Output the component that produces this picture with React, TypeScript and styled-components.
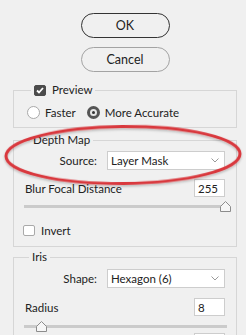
import React from 'react';
import styled, { createGlobalStyle } from 'styled-components';

const GlobalStyle = createGlobalStyle`
  html, body {
    margin: 0;
    background: #f0f0f0;
  }
  body {
    font-family: Lato, "Noto Sans", "Liberation Sans", sans-serif;
    font-size: 11.5px;
    color: #222;
  }
`;

const Panel = styled.div`
  position: relative;
  width: 246px;
  height: 335px;
  overflow: hidden;
  box-sizing: border-box;
  padding: 13px 9px 0 13px;
  display: flex;
  flex-direction: column;
`;

const Buttons = styled.div`
  display: flex;
  flex-direction: column;
  align-items: center;
  gap: 9px;
`;

const PillButton = styled.button<{ $primary?: boolean }>`
  width: 89px;
  height: 25px;
  padding: 0;
  border-radius: 13px;
  border: 1px solid ${(props) => (props.$primary ? '#333' : '#a3a3a3')};
  background: #f0f0f0;
  font-family: inherit;
  font-size: 12.5px;
  color: #222;
`;

const Group = styled.fieldset<{ $gap: number; $bottom?: number }>`
  margin: ${(props) => props.$gap}px 0 0;
  padding: 0 11px ${(props) => props.$bottom ?? 10}px;
  border: 1px solid #d6d6d6;
  min-width: 0;
`;

const Legend = styled.legend<{ $indent: number }>`
  margin-left: ${(props) => props.$indent}px;
  padding: 0 3px;
  height: 14px;
  line-height: 14px;
  display: flex;
  align-items: center;
  gap: 6px;
`;

const Box = styled.span<{ $checked?: boolean }>`
  width: 12px;
  height: 11px;
  box-sizing: border-box;
  border-radius: 2px;
  border: 1px solid ${(props) => (props.$checked ? '#4b4b4b' : '#a9a9a9')};
  background: ${(props) => (props.$checked ? '#4b4b4b' : '#fff')};
  display: flex;
  align-items: center;
  justify-content: center;
  flex: none;
`;

const RadioRow = styled.div`
  display: flex;
  align-items: center;
  margin: 9px 0 0 2px;
  height: 13px;
`;

const RadioItem = styled.label`
  display: flex;
  align-items: center;
  gap: 5px;
  margin-right: 11px;
`;

const Dot = styled.span<{ $checked?: boolean }>`
  width: 13px;
  height: 13px;
  box-sizing: border-box;
  border-radius: 50%;
  border: ${(props) => (props.$checked ? '3px solid #555' : '1px solid #a9a9a9')};
  background: ${(props) => (props.$checked ? '#e6e6e6' : '#fff')};
  display: flex;
  align-items: center;
  justify-content: center;
  &::after {
    content: '';
    display: ${(props) => (props.$checked ? 'block' : 'none')};
    width: 3px;
    height: 3px;
    border-radius: 50%;
    background: #333;
  }
`;

const FieldRow = styled.div<{ $top: number }>`
  display: grid;
  grid-template-columns: 72px 1fr;
  column-gap: 10px;
  align-items: center;
  height: 19px;
  margin-top: ${(props) => props.$top}px;
`;

const FieldLabel = styled.span`
  text-align: right;
`;

const Select = styled.div`
  height: 19px;
  box-sizing: border-box;
  background: #fff;
  border: 1px solid #cdcdcd;
  padding: 0 5px 0 3px;
  display: flex;
  align-items: center;
  justify-content: space-between;
`;

const ValueRow = styled.div<{ $top: number }>`
  display: flex;
  align-items: center;
  justify-content: space-between;
  height: 18px;
  margin-top: ${(props) => props.$top}px;
`;

const NumberBox = styled.div`
  width: 31px;
  height: 18px;
  box-sizing: border-box;
  background: #fff;
  border: 1px solid #cdcdcd;
  padding-left: 3px;
  margin-left: auto;
  display: flex;
  align-items: center;
`;

const Slider = styled.div<{ $top: number }>`
  position: relative;
  height: 11px;
  margin: ${(props) => props.$top}px -2px 0 -1px;
`;

const Track = styled.div`
  position: absolute;
  left: 0;
  right: 0;
  top: 4px;
  height: 3px;
  background: #cbcbcb;
`;

const Thumb = styled.svg`
  position: absolute;
  top: 0;
  width: 11px;
  height: 11px;
`;

const CheckRow = styled.label<{ $top: number }>`
  display: flex;
  align-items: center;
  gap: 6px;
  height: 11px;
  margin: ${(props) => props.$top}px 0 0 -2px;
`;

const Annotation = styled.svg`
  position: absolute;
  left: 0;
  top: 118px;
  width: 246px;
  height: 74px;
  pointer-events: none;
`;

function Chevron() {
  return (
    <svg width="8" height="5" viewBox="0 0 8 5">
      <path d="M0.5 0.5 L4 4 L7.5 0.5" fill="none" stroke="#9a9a9a" strokeWidth="1" />
    </svg>
  );
}

function Check() {
  return (
    <svg width="8" height="7" viewBox="0 0 8 7">
      <path d="M1 3.5 L3 5.5 L7 1" fill="none" stroke="#fff" strokeWidth="1.8" />
    </svg>
  );
}

function SliderBar({ value, max, top }: { value: number; max: number; top: number }) {
  const f = value / max;
  return (
    <Slider $top={top}>
      <Track />
      <Thumb viewBox="0 0 11 11" style={{ left: `calc(${f} * 100% - 7px)` }}>
        <path d="M0.5 10.5 V5.5 L5.5 0.5 L10.5 5.5 V10.5 Z" fill="#f6f6f6" stroke="#8c8c8c" />
      </Thumb>
    </Slider>
  );
}

function App() {
  return (
    <>
      <GlobalStyle />
      <Panel>
        <Buttons>
          <PillButton $primary>OK</PillButton>
          <PillButton>Cancel</PillButton>
        </Buttons>

        <Group $gap={11} $bottom={8}>
          <Legend $indent={6}>
            <Box $checked>
              <Check />
            </Box>
            Preview
          </Legend>
          <RadioRow>
            <RadioItem>
              <Dot />
              Faster
            </RadioItem>
            <RadioItem>
              <Dot $checked />
              More Accurate
            </RadioItem>
          </RadioRow>
        </Group>

        <Group $gap={5}>
          <Legend $indent={5}>Depth Map</Legend>
          <FieldRow $top={4}>
            <FieldLabel>Source:</FieldLabel>
            <Select>
              Layer Mask
              <Chevron />
            </Select>
          </FieldRow>
          <ValueRow $top={9}>
            Blur Focal Distance
            <NumberBox>255</NumberBox>
          </ValueRow>
          <SliderBar value={255} max={255} top={4} />
          <CheckRow $top={13}>
            <Box />
            Invert
          </CheckRow>
        </Group>

        <Group $gap={3}>
          <Legend $indent={4}>Iris</Legend>
          <FieldRow $top={5}>
            <FieldLabel>Shape:</FieldLabel>
            <Select>
              Hexagon (6)
              <Chevron />
            </Select>
          </FieldRow>
          <ValueRow $top={10}>
            Radius
            <NumberBox>8</NumberBox>
          </ValueRow>
          <SliderBar value={8} max={85} top={5} />
          <ValueRow $top={1}>
            <NumberBox />
          </ValueRow>
        </Group>

        <Annotation viewBox="0 0 246 74">
          <defs>
            <filter id="soft" x="-10%" y="-30%" width="120%" height="160%">
              <feDropShadow dx="0" dy="1.5" stdDeviation="1.2" floodColor="#000" floodOpacity="0.25" />
            </filter>
          </defs>
          <ellipse
            cx="123"
            cy="37"
            rx="117"
            ry="28.5"
            transform="rotate(-0.6 123 37)"
            fill="none"
            stroke="#d9393e"
            strokeWidth="3"
            filter="url(#soft)"
          />
        </Annotation>
      </Panel>
    </>
  );
}

export default App;
